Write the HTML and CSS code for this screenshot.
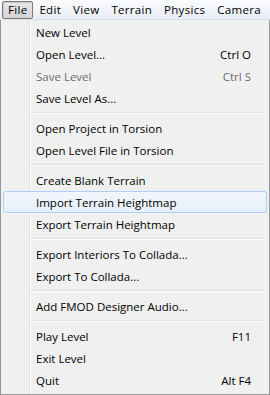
FILE: index.html
```html
<!DOCTYPE html>
<html lang="en">
<head>
    <meta charset="UTF-8">
    <title>Editor menu</title>
    <link rel="stylesheet" href="styles.css">
</head>
<body>
    <!-- Barra de menú -->
    <div class="menubar">
        <span class="menu-title open">File</span>
        <span class="menu-title">Edit</span>
        <span class="menu-title">View</span>
        <span class="menu-title">Terrain</span>
        <span class="menu-title">Physics</span>
        <span class="menu-title">Camera</span>
    </div>

    <!-- Menú desplegable File -->
    <div class="dropdown">
        <div class="item"><span>New Level</span></div>
        <div class="item"><span>Open Level...</span><span class="key">Ctrl O</span></div>
        <div class="item disabled"><span>Save Level</span><span class="key">Ctrl S</span></div>
        <div class="item"><span>Save Level As...</span></div>
        <div class="sep"></div>
        <div class="item"><span>Open Project in Torsion</span></div>
        <div class="item"><span>Open Level File in Torsion</span></div>
        <div class="sep"></div>
        <div class="item"><span>Create Blank Terrain</span></div>
        <div class="item hover"><span>Import Terrain Heightmap</span></div>
        <div class="item"><span>Export Terrain Heightmap</span></div>
        <div class="sep"></div>
        <div class="item"><span>Export Interiors To Collada...</span></div>
        <div class="item"><span>Export To Collada...</span></div>
        <div class="sep"></div>
        <div class="item"><span>Add FMOD Designer Audio...</span></div>
        <div class="sep"></div>
        <div class="item"><span>Play Level</span><span class="key">F11</span></div>
        <div class="item"><span>Exit Level</span></div>
        <div class="item"><span>Quit</span><span class="key">Alt F4</span></div>
    </div>
</body>
</html>
```

FILE: styles.css
```css
* {
    margin: 0;
    padding: 0;
    box-sizing: border-box;
}

body {
    font-family: 'Open Sans', 'Lato', sans-serif;
    font-size: 11.5px;
    color: #000;
    background: #f0f0f0;
    width: 270px;
    height: 395px;
    overflow: hidden;
}

/* Barra superior */
.menubar {
    height: 20px;
    display: flex;
    align-items: center;
    padding: 0 2px;
    letter-spacing: 0.3px;
    background: linear-gradient(#fbfcfe, #e9eef6);
    border-bottom: 1px solid #d9dee6;
}

.menu-title {
    height: 18px;
    line-height: 16px;
    padding: 0 5px;
    border: 1px solid transparent;
}

.menu-title.open {
    border-color: #7a7a7a;
    border-radius: 2px;
    background: linear-gradient(#e8e8e8, #d4d4d4);
    box-shadow: inset 1px 1px 0 #c8c8c8;
}

/* Desplegable */
.dropdown {
    height: 375px;
    border: 1px solid #979797;
    border-top: none;
    padding: 1px 2px;
    background:
        linear-gradient(to right, transparent 28px, #e2e3e3 28px, #e2e3e3 29px, #fff 29px, #fff 30px, transparent 30px),
        #f0f0f0;
}

.item {
    height: 22px;
    display: flex;
    align-items: center;
    justify-content: space-between;
    padding: 0 15px 0 32px;
    border: 1px solid transparent;
    border-radius: 3px;
}

.item.disabled {
    color: #6d6d6d;
}

.item.hover {
    border-color: #aecff7;
    background: linear-gradient(#f2f7fd, #e6effa);
}

.key {
    text-align: right;
}

.sep {
    height: 8px;
    margin-left: 28px;
    background: linear-gradient(transparent 3px, #e0e0e0 3px, #e0e0e0 4px, #fff 4px, #fff 5px, transparent 5px);
}
```
